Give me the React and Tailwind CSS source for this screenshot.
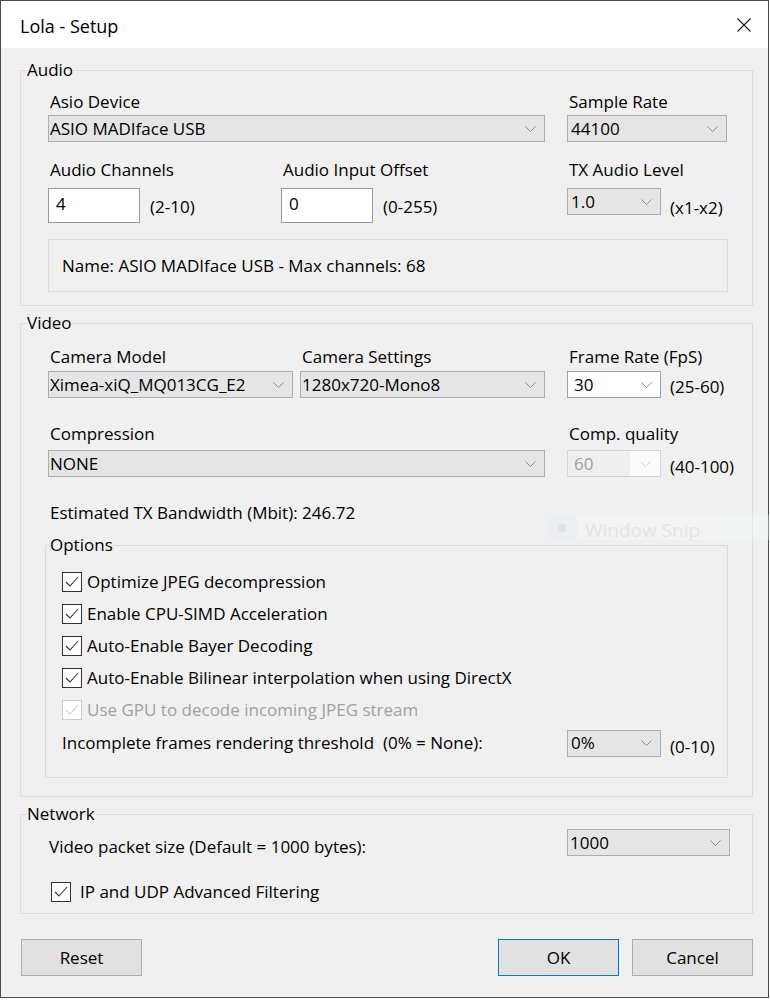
import React from "react";

function Chevron({ color = "#8a8a8a" }) {
  return (
    <svg width="11" height="6" viewBox="0 0 11 6" fill="none">
      <path d="M0.5 0.5L5.5 5.5L10.5 0.5" stroke={color} strokeWidth="1" />
    </svg>
  );
}

function Combo({ value, className }) {
  return (
    <div className={"flex items-center justify-between h-[27px] border bg-[#e5e5e5] border-[#adadad] pr-[8px] leading-5 " + className}>
      <span>{value}</span>
      <Chevron />
    </div>
  );
}

function EditCombo({ value, className }) {
  return (
    <div className={"flex items-center justify-between h-[27px] border bg-white border-[#a0a0a0] pr-[8px] pl-[6px] leading-5 " + className}>
      <span>{value}</span>
      <Chevron />
    </div>
  );
}

function DisabledCombo({ value, className }) {
  return (
    <div className={"flex h-[27px] border border-[#d4d4d4] leading-5 " + className}>
      <div className="flex-1 flex items-center bg-[#efefef] pl-[6px] text-[#a0a0a0]">{value}</div>
      <div className="w-[30px] flex items-center justify-center bg-[#fbfbfb]">
        <Chevron color="#cfcfcf" />
      </div>
    </div>
  );
}

function Check({ disabled }) {
  const c = disabled ? "#cccccc" : "#333333";
  return (
    <svg width="20" height="20" viewBox="0 0 20 20" className="shrink-0">
      <rect x="0.5" y="0.5" width="19" height="19" fill="white" stroke={c} />
      <path d="M4 10L8 14L16 5" fill="none" stroke={c} strokeWidth="1.1" />
    </svg>
  );
}

function Label({ children }) {
  return <div className="pl-[2px] leading-5">{children}</div>;
}

function Group({ title, className, legendClass, children }) {
  return (
    <fieldset className={"border border-[#dcdcdc] " + className}>
      <legend className={"leading-5 " + legendClass}>{title}</legend>
      {children}
    </fieldset>
  );
}

function CheckRow({ label, disabled }) {
  return (
    <div className="h-[32px] flex items-center">
      <Check disabled={disabled} />
      <span className={"ml-[5px] leading-5 " + (disabled ? "text-[#a0a0a0]" : "")}>{label}</span>
    </div>
  );
}

export default function App() {
  return (
    <div className="relative w-[770px] h-[1000px] bg-white text-[17px] text-black font-['Open_Sans','Noto_Sans',sans-serif]">
      <div className="w-[769px] h-[998px] border border-[#4a4a4a] flex flex-col bg-[#f0f0f0]">
        {/* title bar */}
        <div className="h-[47px] bg-white flex items-center justify-between pl-[19px] pr-[17px]">
          <span className="text-[18px] leading-6 pt-[2px]">Lola - Setup</span>
          <svg width="14" height="14" viewBox="0 0 14 14">
            <path d="M0.5 0.5L13.5 13.5M13.5 0.5L0.5 13.5" stroke="#1a1a1a" strokeWidth="1.1" />
          </svg>
        </div>

        <div className="flex-1 pl-[19px] pr-[15px] pt-[12px]">
          {/* Audio */}
          <Group title="Audio" legendClass="ml-[6px]">
            <div className="pl-[27px] pt-[12px] pb-[13px]">
              <div className="flex">
                <div className="w-[497px]">
                  <Label>Asio Device</Label>
                  <Combo value="ASIO MADIface USB" className="mt-[3px] w-[497px] pl-[1px]" />
                </div>
                <div className="ml-[22px]">
                  <Label>Sample Rate</Label>
                  <Combo value="44100" className="mt-[3px] w-[160px] pl-[3px]" />
                </div>
              </div>

              <div className="flex mt-[18px]">
                <div className="w-[233px]">
                  <Label>Audio Channels</Label>
                  <div className="flex items-start mt-[8px]">
                    <div className="w-[92px] h-[35px] bg-white border border-[#9a9a9a] pl-[7px] pt-[5px] leading-5">4</div>
                    <span className="ml-[10px] mt-[9px] leading-5">(2-10)</span>
                  </div>
                </div>
                <div className="w-[286px]">
                  <Label>Audio Input Offset</Label>
                  <div className="flex items-start mt-[8px]">
                    <div className="w-[92px] h-[35px] bg-white border border-[#9a9a9a] pl-[7px] pt-[5px] leading-5">0</div>
                    <span className="ml-[10px] mt-[9px] leading-5">(0-255)</span>
                  </div>
                </div>
                <div>
                  <Label>TX Audio Level</Label>
                  <div className="flex items-start mt-[8px]">
                    <Combo value="1.0" className="w-[94px] pl-[3px]" />
                    <span className="ml-[9px] mt-[10px] leading-5">(x1-x2)</span>
                  </div>
                </div>
              </div>

              <div className="mt-[16px] w-[680px] h-[53px] border border-[#dcdcdc] flex items-center pl-[13px] leading-5">
                Name: ASIO MADIface USB - Max channels: 68
              </div>
            </div>
          </Group>

          {/* Video */}
          <Group title="Video" legendClass="ml-[6px]" className="mt-[7px]">
            <div className="pl-[27px] pt-[14px] pb-[18px]">
              <div className="flex">
                <div className="w-[252px]">
                  <Label>Camera Model</Label>
                  <Combo value="Ximea-xiQ_MQ013CG_E2" className="mt-[4px] w-[245px] pl-[1px]" />
                </div>
                <div className="w-[267px]">
                  <Label>Camera Settings</Label>
                  <Combo value="1280x720-Mono8" className="mt-[4px] w-[245px] pl-[1px]" />
                </div>
                <div>
                  <Label>Frame Rate (FpS)</Label>
                  <div className="flex items-start mt-[4px]">
                    <EditCombo value="30" className="w-[94px]" />
                    <span className="ml-[9px] mt-[6px] leading-5">(25-60)</span>
                  </div>
                </div>
              </div>

              <div className="flex mt-[26px]">
                <div className="w-[519px]">
                  <Label>Compression</Label>
                  <Combo value="NONE" className="mt-[6px] w-[497px] pl-[1px]" />
                </div>
                <div>
                  <Label>Comp. quality</Label>
                  <div className="flex items-start mt-[6px]">
                    <DisabledCombo value="60" className="w-[94px]" />
                    <span className="ml-[9px] mt-[7px] leading-5">(40-100)</span>
                  </div>
                </div>
              </div>

              <div className="mt-[26px] leading-5 pl-[2px]">Estimated TX Bandwidth (Mbit): 246.72</div>

              <Group title="Options" legendClass="ml-[4px]" className="mt-[12px] -ml-[3px] w-[683px]">
                <div className="pl-[16px] pt-[11px] pb-[17px]">
                  <CheckRow label="Optimize JPEG decompression" />
                  <CheckRow label="Enable CPU-SIMD Acceleration" />
                  <CheckRow label="Auto-Enable Bayer Decoding" />
                  <CheckRow label="Auto-Enable Bilinear interpolation when using DirectX" />
                  <CheckRow label="Use GPU to decode incoming JPEG stream" disabled />
                  <div className="h-[34px] flex items-center">
                    <span className="w-[505px] leading-5 whitespace-pre">Incomplete frames rendering threshold  (0% = None):</span>
                    <div className="flex items-start">
                      <Combo value="0%" className="w-[94px] h-[26px] pl-[3px]" />
                      <span className="ml-[9px] mt-[7px] leading-5">(0-10)</span>
                    </div>
                  </div>
                </div>
              </Group>
            </div>
          </Group>

          {/* Network */}
          <Group title="Network" legendClass="ml-[6px]" className="mt-[7px]">
            <div className="pl-[28px] pt-[5px] pb-[11px]">
              <div className="flex items-start">
                <span className="w-[518px] mt-[8px] leading-5">Video packet size (Default = 1000 bytes):</span>
                <Combo value="1000" className="w-[163px] pl-[2px]" />
              </div>
              <div className="mt-[25px] h-[20px] flex items-center pl-[2px]">
                <Check />
                <span className="ml-[9px] leading-5">IP and UDP Advanced Filtering</span>
              </div>
            </div>
          </Group>

          {/* Buttons */}
          <div className="flex mt-[25px] pl-[1px]">
            <button className="w-[121px] h-[37px] bg-[#e1e1e1] border border-[#adadad]">Reset</button>
            <div className="flex-1" />
            <button className="w-[121px] h-[37px] bg-[#e1e1e1] border border-[#0078d7]">OK</button>
            <button className="ml-[13px] w-[121px] h-[37px] bg-[#e1e1e1] border border-[#adadad]">Cancel</button>
          </div>
        </div>
      </div>

      {/* faint snipping tool overlay */}
      <div className="absolute left-[547px] top-[515px] w-[223px] h-[25px] flex items-center bg-[#f6f7f8]/40">
        <div className="w-[30px] h-[25px] flex items-center justify-center bg-[#e6ecf3]/60">
          <div className="w-[8px] h-[8px] rounded-full bg-[#e2e2e2]" />
        </div>
        <span className="ml-[8px] pt-[4px] text-[19px] leading-6 text-[#e4e4e4]">Window Snip</span>
      </div>
    </div>
  );
}
